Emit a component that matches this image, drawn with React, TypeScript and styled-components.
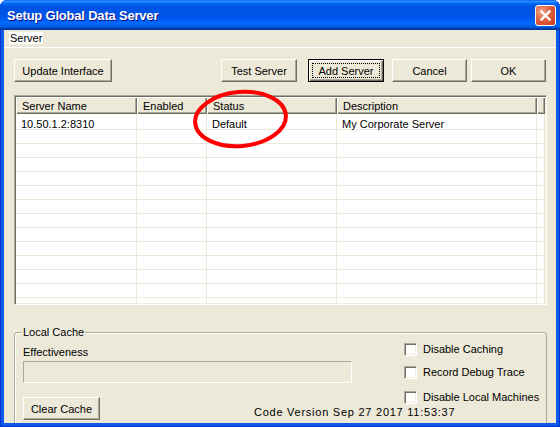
import styled, { createGlobalStyle } from "styled-components";

const GlobalStyle = createGlobalStyle`
  html, body {
    margin: 0;
    padding: 0;
    background: #ffffff;
  }
  body {
    font-family: "Liberation Sans", Arial, sans-serif;
    font-size: 11px;
    color: #000;
  }
`;

const Window = styled.div`
  position: relative;
  width: 560px;
  height: 427px;
  box-sizing: border-box;
  display: flex;
  flex-direction: column;
  padding: 0 4px 4px 4px;
  background: #0c5ae6;
  box-shadow: inset 1px 0 #0831d9, inset -1px 0 #0831d9, inset 0 -1px #0831d9;
  border-radius: 7px 7px 0 0;
  overflow: hidden;
`;

const TitleBar = styled.div`
  height: 30px;
  margin: 0 -4px;
  padding: 0 5px 0 7px;
  display: flex;
  align-items: center;
  justify-content: space-between;
  flex-shrink: 0;
  background: linear-gradient(
    to bottom,
    #0058ee 0%,
    #3593ff 4%,
    #288eff 6%,
    #127dff 8%,
    #036ffc 10%,
    #0262ee 14%,
    #0057e5 20%,
    #0054e3 24%,
    #0055eb 56%,
    #005bf5 66%,
    #026afe 76%,
    #0062ef 86%,
    #0052d6 92%,
    #0040ab 94%,
    #003092 100%
  );
  border-radius: 7px 7px 0 0;
`;

const Title = styled.div`
  font-family: "Liberation Sans", Arial, sans-serif;
  font-weight: bold;
  font-size: 13px;
  color: #fff;
  text-shadow: 1px 1px #0f1089;
  letter-spacing: -0.2px;
  padding-top: 1px;
`;

const CloseBox = styled.div`
  width: 21px;
  height: 21px;
  box-sizing: border-box;
  border: 1px solid #fff;
  border-radius: 3px;
  background: radial-gradient(circle at 30% 30%, #f0a48a 0%, #e1603e 45%, #c8391b 100%);
  display: flex;
  align-items: center;
  justify-content: center;
  margin: 1px -1px 0 0;
`;

const Client = styled.div`
  flex: 1;
  display: flex;
  flex-direction: column;
  background: #ece9d8;
  overflow: hidden;
`;

const MenuBar = styled.div`
  height: 18px;
  flex-shrink: 0;
  box-sizing: border-box;
  border-bottom: 1px solid #fff;
  padding: 2px 0 0 5px;
  display: flex;
`;

const MenuItem = styled.span`
  background: #fff;
  height: 12px;
  line-height: 13px;
  padding: 0 1px;
`;

const ButtonRow = styled.div`
  display: flex;
  margin-top: 11px;
  padding: 0 10px;
  flex-shrink: 0;
`;

const Btn = styled.button<{ $w: number; $ml?: number; $isDefault?: boolean }>`
  position: relative;
  width: ${(p) => p.$w}px;
  height: 23px;
  margin-left: ${(p) => p.$ml ?? 0}px;
  padding: 0;
  box-sizing: border-box;
  font-family: "Liberation Sans", Arial, sans-serif;
  font-size: 11px;
  color: #000;
  background: #ece9d8;
  border: 1px solid;
  border-color: ${(p) => (p.$isDefault ? "#000" : "#fff #716f64 #716f64 #fff")};
  box-shadow: ${(p) =>
    p.$isDefault
      ? "inset 1px 1px #fff, inset -1px -1px #716f64, inset -2px -2px #aca899"
      : "inset -1px -1px #aca899"};
  ${(p) =>
    p.$isDefault &&
    `
    &::after {
      content: "";
      position: absolute;
      inset: 3px;
      border: 1px dotted #000;
    }
  `}
`;

const List = styled.div`
  margin: 13px 9px 0 10px;
  height: 210px;
  flex-shrink: 0;
  box-sizing: border-box;
  border: 1px solid;
  border-color: #aca899 #fff #fff #aca899;
  box-shadow: inset 1px 1px #716f64, inset -1px -1px #f1efe2;
  padding: 1px;
  background: #fff;
  overflow: hidden;
`;

const HeaderRow = styled.div`
  display: flex;
  height: 17px;
`;

const HeaderCell = styled.div<{ $w?: number }>`
  ${(p) => (p.$w ? `width: ${p.$w}px;` : "flex: 1;")}
  flex-shrink: 0;
  box-sizing: border-box;
  padding-left: 6px;
  line-height: 18px;
  overflow: hidden;
  background: #ece9d8;
  box-shadow: inset 1px 1px #fff, inset -1px -1px #716f64, inset -2px -2px #aca899;
  white-space: nowrap;
`;

const Row = styled.div<{ $h: number }>`
  display: flex;
  height: ${(p) => p.$h}px;
  box-sizing: border-box;
  border-bottom: 1px solid #ece9d8;
`;

const Cell = styled.div<{ $w?: number }>`
  ${(p) => (p.$w ? `width: ${p.$w}px;` : "flex: 1;")}
  flex-shrink: 0;
  box-sizing: border-box;
  border-right: 1px solid #ece9d8;
  padding-left: 5px;
  display: flex;
  align-items: flex-end;
  line-height: 10px;
  white-space: nowrap;
`;

const Group = styled.fieldset`
  margin: 21px 9px 0 10px;
  padding: 4px 0 0 8px;
  height: 112px;
  flex-shrink: 0;
  min-width: 0;
  border: 1px solid #aca899;
  border-radius: 3px;
  box-shadow: inset 1px 1px #fff;
`;

const Legend = styled.legend`
  padding: 0 1px;
  margin-left: -1px;
  line-height: 13px;
  font-size: 11px;
`;

const CacheGrid = styled.div`
  display: grid;
  grid-template-columns: 231px 150px 1fr;
  grid-template-rows: auto auto auto;
`;

const FieldLabel = styled.div`
  grid-column: 1 / 3;
  padding-top: 3px;
  line-height: 13px;
`;

const Progress = styled.div`
  grid-column: 1 / 3;
  width: 329px;
  height: 22px;
  margin-top: 2px;
  box-sizing: border-box;
  border: 1px solid;
  border-color: #aca899 #fff #fff #aca899;
  background: #ece9d8;
`;

const ButtonCell = styled.div`
  grid-column: 1;
  grid-row: 3;
  margin-top: 14px;
  display: flex;
`;

const VersionText = styled.div`
  grid-column: 2;
  grid-row: 3;
  align-self: end;
  margin-bottom: 1px;
  line-height: 13px;
  white-space: nowrap;
  letter-spacing: 0.75px;
`;

const Checks = styled.div`
  grid-column: 3;
  grid-row: 1 / 4;
  display: flex;
  flex-direction: column;
`;

const CheckRow = styled.label<{ $mt: number }>`
  display: flex;
  align-items: center;
  gap: 6px;
  height: 13px;
  margin-top: ${(p) => p.$mt}px;
  line-height: 13px;
  white-space: nowrap;
`;

const Box = styled.span`
  width: 13px;
  height: 13px;
  box-sizing: border-box;
  border: 1px solid;
  border-color: #aca899 #fff #fff #aca899;
  box-shadow: inset 1px 1px #716f64, inset -1px -1px #f1efe2;
  background: #fff;
  flex-shrink: 0;
`;

const Annotation = styled.svg`
  position: absolute;
  left: 188px;
  top: 85px;
  pointer-events: none;
`;

const columns = [
  { key: "name", title: "Server Name", w: 121 },
  { key: "enabled", title: "Enabled", w: 70 },
  { key: "status", title: "Status", w: 130 },
  { key: "desc", title: "Description", w: 200 },
];

const servers = [
  { name: "10.50.1.2:8310", enabled: "", status: "Default", desc: "My Corporate Server" },
];

export default function App() {
  const rows: any[] = [...servers];
  while (rows.length < 14) rows.push({ name: "", enabled: "", status: "", desc: "" });

  return (
    <>
      <GlobalStyle />
      <Window>
        <TitleBar>
          <Title>Setup Global Data Server</Title>
          <CloseBox>
            <svg width="13" height="13" viewBox="0 0 13 13">
              <path d="M2.5 2.5 L10.5 10.5 M10.5 2.5 L2.5 10.5" stroke="#fff" strokeWidth="2.4" strokeLinecap="square" />
            </svg>
          </CloseBox>
        </TitleBar>
        <Client>
          <MenuBar>
            <MenuItem>Server</MenuItem>
          </MenuBar>
          <ButtonRow>
            <Btn $w={98}>Update Interface</Btn>
            <Btn $w={76} $ml={109}>Test Server</Btn>
            <Btn $w={76} $ml={11} $isDefault>Add Server</Btn>
            <Btn $w={75} $ml={8}>Cancel</Btn>
            <Btn $w={75} $ml={4}>OK</Btn>
          </ButtonRow>
          <List>
            <HeaderRow>
              {columns.map((c) => (
                <HeaderCell key={c.key} $w={c.w}>{c.title}</HeaderCell>
              ))}
              <HeaderCell />
            </HeaderRow>
            {rows.map((r, i) => (
              <Row key={i} $h={i === 0 ? 16 : 14}>
                {columns.map((c) => (
                  <Cell key={c.key} $w={c.w}>{r[c.key]}</Cell>
                ))}
                <Cell />
              </Row>
            ))}
          </List>
          <Group>
            <Legend>Local Cache</Legend>
            <CacheGrid>
              <FieldLabel>Effectiveness</FieldLabel>
              <Progress />
              <ButtonCell>
                <Btn $w={77}>Clear Cache</Btn>
              </ButtonCell>
              <VersionText>Code Version Sep 27 2017 11:53:37</VersionText>
              <Checks>
                <CheckRow $mt={0}><Box />Disable Caching</CheckRow>
                <CheckRow $mt={10}><Box />Record Debug Trace</CheckRow>
                <CheckRow $mt={12}><Box />Disable Local Machines</CheckRow>
              </Checks>
            </CacheGrid>
          </Group>
        </Client>
        <Annotation width="106" height="68" viewBox="0 0 106 68">
          <ellipse cx="52.5" cy="34" rx="45.5" ry="27" fill="none" stroke="#ff0000" strokeWidth="4" transform="rotate(-5 52.5 34)" />
        </Annotation>
      </Window>
    </>
  );
}
